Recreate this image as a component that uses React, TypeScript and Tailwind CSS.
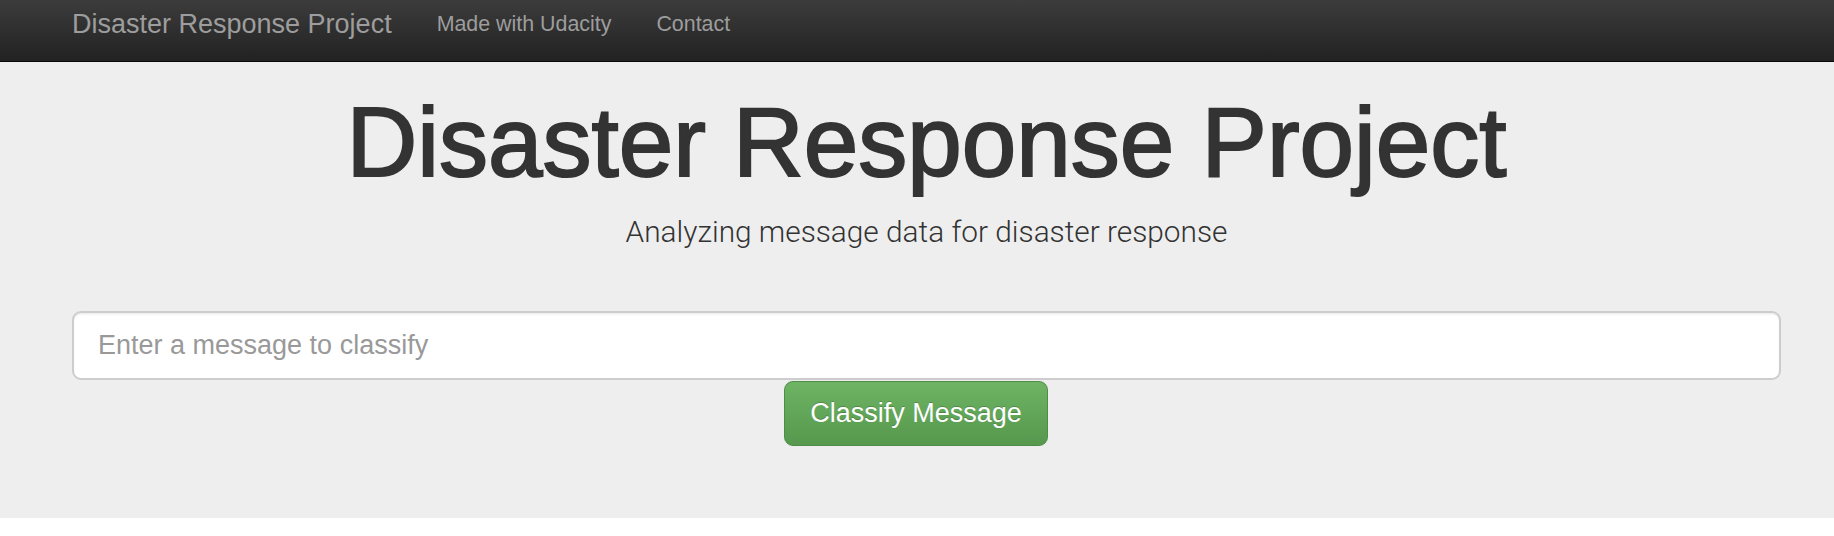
import React from "react";

const App: React.FC = () => {
  return (
    <div className="min-h-[536px] bg-white font-['Liberation_Sans',Arial,sans-serif]">
      <nav className="h-[62px] border-b border-[#080808] bg-gradient-to-b from-[#3c3c3c] to-[#222]">
        <div className="ml-[72px] flex h-[48px] items-center">
          <a className="text-[27px] leading-none text-[#9d9d9d]">Disaster Response Project</a>
          <ul className="ml-[45px] mt-[2px] flex items-center gap-[45px] text-[21.4px] leading-none text-[#9d9d9d]">
            <li>
              <a>Made with Udacity</a>
            </li>
            <li>
              <a>Contact</a>
            </li>
          </ul>
        </div>
      </nav>

      <div className="h-[456px] bg-[#eee]">
        <div className="ml-[72px] w-[1709px] pt-[31px]">
          <h1 className="text-center text-[98px] leading-none text-[#333] [-webkit-text-stroke:2px_#333]">
            Disaster Response Project
          </h1>
          <p className="mt-[26px] text-center font-['Roboto',sans-serif] text-[29.8px] font-light leading-none text-[#333]">
            Analyzing message data for disaster response
          </p>
          <input
            type="text"
            placeholder="Enter a message to classify"
            className="mt-[64px] block h-[69px] w-full rounded-[9px] border-2 border-[#cdcdcd] bg-white px-[24px] text-[27px] text-[#555] shadow-[inset_0_1.5px_1.5px_rgba(0,0,0,0.075)] outline-none placeholder:text-[#999]"
          />
          <button className="mt-px ml-[712px] h-[65px] w-[264px] rounded-[9px] border-[1.5px] border-[#4e8d46] bg-gradient-to-b from-[#6eb464] to-[#56984d] text-[27px] leading-none text-white [text-shadow:0_-1px_0_rgba(0,0,0,0.2)]">
            Classify Message
          </button>
        </div>
      </div>
    </div>
  );
};

export default App;
